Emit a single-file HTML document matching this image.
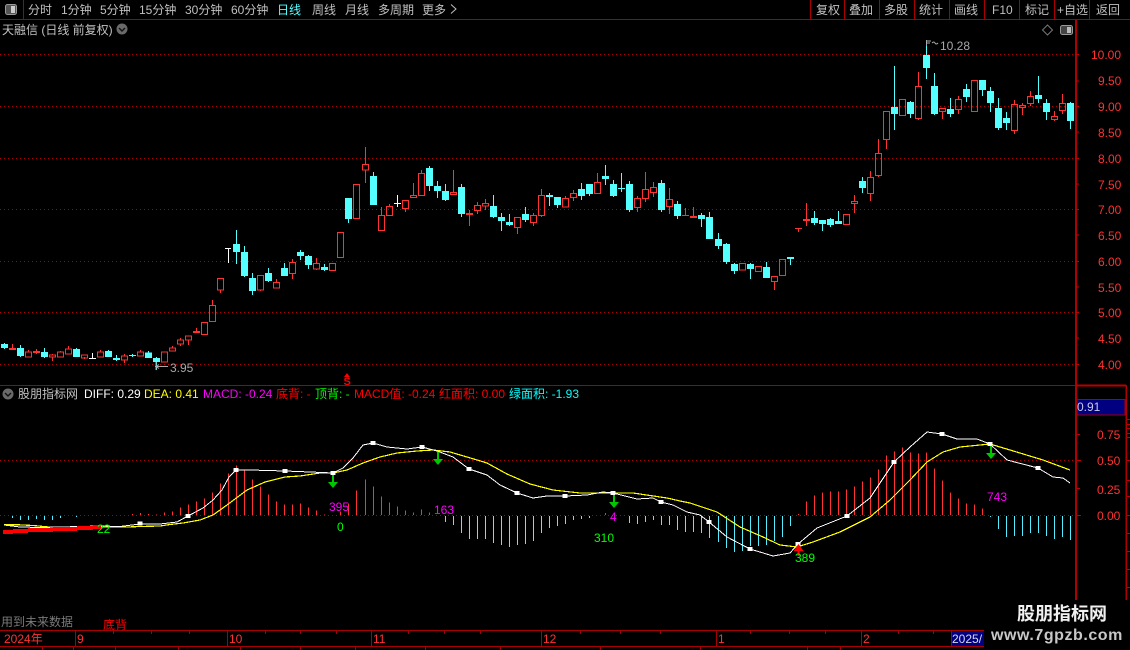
<!DOCTYPE html>
<html><head><meta charset="utf-8"><style>
html,body{margin:0;padding:0;background:#000;width:1130px;height:650px;overflow:hidden}
svg{display:block}
text{font-family:"Liberation Sans","WenQuanYi Zen Hei","Noto Sans CJK SC",sans-serif;font-size:12px}
</style></head><body>
<svg width="1130" height="650" viewBox="0 0 1130 650" xmlns="http://www.w3.org/2000/svg">
<defs><pattern id="d" width="4" height="1" patternUnits="userSpaceOnUse"><rect width="1" height="1" fill="#b00000"/></pattern></defs>
<rect width="1130" height="650" fill="#000"/>
<!-- grid -->
<g fill="url(#d)" shape-rendering="crispEdges">
<rect x="0" y="54" width="1075" height="1"/><rect x="0" y="106" width="1075" height="1"/><rect x="0" y="158" width="1075" height="1"/><rect x="0" y="209" width="1075" height="1"/><rect x="0" y="261" width="1075" height="1"/><rect x="0" y="312" width="1075" height="1"/><rect x="0" y="364" width="1075" height="1"/><rect x="0" y="460" width="1075" height="1"/><rect x="0" y="515" width="1075" height="1"/>
</g>
<!-- frame lines -->
<g stroke="#a80000" fill="none" shape-rendering="crispEdges">
<path d="M0 19.5H1130M23.5 0V19M810.5 0V19M844.5 0V19M879.5 0V19M914.5 0V19M949.5 0V19M984.5 0V19M1019.5 0V19M1054.5 0V19M1089.5 0V19"/>
<path d="M0 385.5H1075"/>
<path d="M0 630.5H1130M0 646.5H1130M75.5 631V646M227.5 631V646M371.5 631V646M541.5 631V646M716.5 631V646M861.5 631V646M951.5 631V646"/>
<path d="M113.5 631V634M151.5 631V634M189.5 631V634M265.5 631V634M300.5 631V634M336.5 631V634M408.5 631V634M444.5 631V634M480.5 631V634M580.5 631V634M620.5 631V634M660.5 631V634M750.5 631V634M789.5 631V634M825.5 631V634M898.5 631V634M933.5 631V634"/>
<path d="M42.5 647V650M73.5 647V650M115.5 647V650M178.5 647V650M240.5 647V650M300.5 647V650M355.5 647V650M425.5 647V650M500.5 647V650M600.5 647V650M700.5 647V650M807.5 647V650M840.5 647V650"/>
</g>
<path d="M1076 20V630" stroke="#b00000" stroke-width="2" shape-rendering="crispEdges"/>
<path d="M1076 385.5H1126" stroke="#b80000" stroke-width="2" shape-rendering="crispEdges"/>
<path d="M1126 385V600" stroke="#b00000" stroke-width="1.5" shape-rendering="crispEdges"/>
<path d="M1075 81H1079M1075 54.5H1079M1075 106.5H1079M1075 132H1079M1075 158.5H1079M1075 184H1079M1075 209.5H1079M1075 235H1079M1075 261.5H1079M1075 287H1079M1075 312.5H1079M1075 338H1079M1075 364.5H1079M1077 434.5H1080M1077 460.5H1081M1077 488.5H1080M1077 515.5H1081M1127 419.5H1130M1127 424.5H1130M1127 428.5H1130M1127 433.5H1130M1127 437.5H1130M1127 460.5H1130M1127 480.5H1130M1127 496.5H1130M1127 515.5H1130M1127 533.5H1130M1127 551.5H1130M1127 569.5H1130M1127 587.5H1130" stroke="#c00000" shape-rendering="crispEdges"/>
<!-- candles -->
<g shape-rendering="crispEdges">
<path fill="none" stroke="#54ffff" d="M4.5 343V349M20.5 345V357M44.5 348V358M76.5 348V357M108.5 350V357M116.5 355V361M132.5 354V357M148.5 351V358M156.5 357V370M236.5 230V264M244.5 246V277M252.5 273V295M268.5 268V282M284.5 263V276M300.5 250V260M308.5 255V269M324.5 264V271M348.5 198V223M373.5 172V205M429.5 166V191M437.5 181V198M445.5 184V201M461.5 184V217M493.5 195V218M501.5 213V231M509.5 214V226M525.5 207V222M549.5 193V206M557.5 197V208M581.5 183V200M589.5 184V196M605.5 165V185M613.5 180V197M621.5 173V192M629.5 181V212M661.5 180V212M677.5 201V219M701.5 213V227M709.5 212V239M718.5 233V249M726.5 243V264M734.5 263V274M750.5 263V279M766.5 262V278M790.5 257V265M814.5 211V225M822.5 220V231M830.5 218V227M838.5 211V224M862.5 177V193M894.5 66V130M910.5 101V118M926.5 45V79M934.5 73V115M950.5 98V117M966.5 84V102M982.5 80V96M990.5 87V112M998.5 98V130M1006.5 112V130M1038.5 76V103M1046.5 99V120M1070.5 102V129"/>
<path fill="#54ffff" d="M1 344h7v4h-7zM17 348h7v8h-7zM41 352h7v5h-7zM73 349h7v8h-7zM105 351h7v6h-7zM113 358h7v2h-7zM129 355h7v1h-7zM145 352.500h7v5.500h-7zM153 358h7v4h-7zM233 244h7v8h-7zM241 252h7v24h-7zM249 278h7v13h-7zM265 273h7v8h-7zM281 268h7v8h-7zM297 252h7v4h-7zM305 256h7v9h-7zM321 267h7v3h-7zM345 198h7v21h-7zM370 176h7v29h-7zM426 168h7v18h-7zM434 186h7v5h-7zM442 191h7v9h-7zM458 187h7v27h-7zM490 206h7v11h-7zM498 217h7v4h-7zM506 222h7v3h-7zM522 214h7v6h-7zM546 195h7v2h-7zM554 197h7v8h-7zM578 189h7v7h-7zM586 184h7v10h-7zM602 176h7v3h-7zM610 184h7v12h-7zM618 188h7v1h-7zM626 184h7v26h-7zM658 183h7v27h-7zM674 204h7v12h-7zM698 215h7v4h-7zM706 217h7v22h-7zM715 239h7v7h-7zM723 244h7v18h-7zM731 264h7v7h-7zM747 264h7v5h-7zM763 267h7v11h-7zM787 257h7v2h-7zM811 218h7v5h-7zM819 220h7v4h-7zM827 219h7v6h-7zM835 221h7v3h-7zM859 181h7v7h-7zM891 107h7v7h-7zM907 102h7v12h-7zM923 55h7v13h-7zM931 86h7v28h-7zM947 109h7v5h-7zM963 89h7v8h-7zM979 80h7v10h-7zM987 91h7v12h-7zM995 108h7v20h-7zM1003 118h7v5h-7zM1035 95h7v4h-7zM1043 103h7v9h-7zM1067 103h7v18h-7z"/>
<path fill="none" stroke="#ff3232" d="M12.500 344V350M36.500 349V354M196.500 328V333M469.500 210V226M693.500 207V218M806.500 203V226M685.500 208V216M798.500 228V232M28.500 350V352M52.500 354V355M52.500 357V361M60.500 351V352M68.500 346V349M84.500 357V359M100.500 350V352M124.500 354V356M124.500 360V363M140.500 350V352M172.500 346V348M180.500 338V340M180.500 344V346M188.500 340V345M212.500 300V305M212.500 321V322M220.500 290V293M260.500 290V291M276.500 279V282M292.500 259V263M292.500 273V279M316.500 258V264M316.500 269V270M365.500 147V165M365.500 170V183M381.500 207V215M389.500 204V207M405.500 208V212M413.500 183V195M421.500 170V174M453.500 170V192M477.500 202V206M477.500 210V214M485.500 199V204M485.500 206V210M517.500 227V234M533.500 213V216M533.500 222V226M541.500 189V196M541.500 215V217M565.500 196V199M573.500 190V194M573.500 197V201M597.500 173V183M637.500 196V199M637.500 207V212M645.500 172V190M645.500 198V202M653.500 182V188M653.500 192V197M669.500 188V200M669.500 206V214M774.500 281V290M854.500 195V201M854.500 204V213M870.500 171V177M870.500 193V201M878.500 139V153M878.500 175V177M886.500 139V149M918.500 72V86M918.500 118V120M942.500 111V119M958.500 96V100M958.500 110V114M974.500 80.500V81M1014.500 100V105M1014.500 130V134M1022.500 103V106M1022.500 107V115M1030.500 91V97M1030.500 103V106M1054.500 111V117M1054.500 119V121M1062.500 94V104M1062.500 110V114"/>
<path fill="#ff3232" d="M9 348h7v2h-7zM33 351h7v2h-7zM193 331h7v2h-7zM466 213h7v2h-7zM690 216h7v2h-7zM803 219h7v2h-7zM682 215h7v1h-7zM795 228h7v1h-7z"/>
<path fill="none" stroke="#ff3232" d="M25.500 352h6v5h-6zM49.500 355h6v2h-6zM57.500 352h6v5h-6zM65.500 349h6v5h-6zM81.500 355h6v3h-6zM97.500 352h6v5h-6zM121.500 356h6v4h-6zM137.500 352h6v4h-6zM161.500 352h6v10h-6zM169.500 348h6v3h-6zM177.500 340h6v4h-6zM185.500 336h6v4h-6zM201.500 322.500h6v12h-6zM209.500 305.500h6v16h-6zM217.500 278.500h6v11.500h-6zM257.500 275.500h6v14.500h-6zM273.500 282.500h6v5.500h-6zM289.500 262.500h6v11h-6zM313.500 263.500h6v5.500h-6zM329.500 263.500h6v7h-6zM337.500 232.500h6v25h-6zM353.500 184.500h6v34h-6zM362.500 164.500h6v5.500h-6zM378.500 215.500h6v15h-6zM386.500 206.500h6v9h-6zM402.500 200.500h6v8h-6zM410.500 195.500h6v2h-6zM418.500 173.500h6v22h-6zM450.500 192.500h6v2h-6zM474.500 205.500h6v5h-6zM482.500 203.500h6v2.500h-6zM514.500 217.500h6v10h-6zM530.500 215.500h6v7h-6zM538.500 195.500h6v20h-6zM562.500 198.500h6v8.500h-6zM570.500 193.500h6v4h-6zM594.500 182.500h6v11h-6zM634.500 198.500h6v9h-6zM642.500 189.500h6v9h-6zM650.500 187.500h6v5h-6zM666.500 199.500h6v7h-6zM739.500 263.500h6v6.500h-6zM755.500 266.500h6v5h-6zM771.500 276.500h6v5h-6zM779.500 259.500h6v16h-6zM843.500 214.500h6v10h-6zM851.500 201.500h6v2h-6zM867.500 177.500h6v16h-6zM875.500 153.500h6v22h-6zM883.500 111.500h6v28h-6zM899.500 99.500h6v16h-6zM915.500 86.500h6v32h-6zM939.500 108.500h6v3h-6zM955.500 99.500h6v10h-6zM971.500 80.500h6v31h-6zM1011.500 104.500h6v26h-6zM1019.500 105.500h6v2h-6zM1027.500 96.500h6v7h-6zM1051.500 116.500h6v3h-6zM1059.500 103.500h6v7h-6z"/>
<path fill="none" stroke="#fff" d="M92.500 353V358M89 358.500h7M228.500 248V263M225 248.500h6M397.500 195V207M394 203.500h7"/>
</g>
<!-- high low labels -->
<path d="M156 362V370M155 366.500H168M156 366.500l3-2M156 366.500l3 2" stroke="#aaa" fill="none"/>
<text x="170" y="372" fill="#a8a8a8">3.95</text>
<path d="M926.500 40V46M927 41h4M927 43h3M932 43q2-2 3 0t3 0" stroke="#aaa" fill="none"/>
<text x="940" y="50" fill="#a8a8a8">10.28</text>
<!-- S marker -->
<path d="M347 373l3 4h-6z" fill="#f00"/>
<text x="343.500" y="385" fill="#f00" style="font-weight:bold;font-size:11px">S</text>
<!-- header -->
<rect x="5.500" y="4.500" width="11" height="10" rx="2" fill="#555" stroke="#999"/><rect x="11" y="6" width="4" height="7" fill="#ccc"/>
<g fill="#c0c0c0">
<text x="28" y="14">分时</text><text x="61" y="14">1分钟</text><text x="100" y="14">5分钟</text><text x="139" y="14">15分钟</text><text x="185" y="14">30分钟</text><text x="231" y="14">60分钟</text>
<text x="277" y="14" fill="#54ffff">日线</text>
<text x="312" y="14">周线</text><text x="345" y="14">月线</text><text x="378" y="14">多周期</text><text x="422" y="14">更多</text>
<text x="816" y="14">复权</text><text x="849" y="14">叠加</text><text x="884" y="14">多股</text><text x="919" y="14">统计</text><text x="954" y="14">画线</text><text x="992" y="14">F10</text><text x="1025" y="14">标记</text><text x="1057" y="14">+自选</text><text x="1096" y="14">返回</text>
<text x="2" y="34">天融信 (日线 前复权)</text>
</g>
<path d="M451 4.500l5 4.500-5 4.500" stroke="#c0c0c0" fill="none"/>
<circle cx="122" cy="29" r="5.500" fill="#6a6a6a"/><path d="M119 28l3 3 3-3" stroke="#111" fill="none" stroke-width="1.400"/>
<path d="M1047.500 25l5 5-5 5-5-5z" stroke="#777" fill="none"/>
<rect x="1060.500" y="25.500" width="12" height="9" rx="2" fill="#444" stroke="#999"/><rect x="1067" y="27" width="4" height="6" fill="#bbb"/>
<!-- axis labels -->
<g fill="#ff3232">
<text x="1091" y="59">10.00</text><text x="1098" y="85">9.50</text><text x="1098" y="111">9.00</text><text x="1098" y="137">8.50</text><text x="1098" y="163">8.00</text><text x="1098" y="189">7.50</text><text x="1098" y="214">7.00</text><text x="1098" y="240">6.50</text><text x="1098" y="266">6.00</text><text x="1098" y="292">5.50</text><text x="1098" y="317">5.00</text><text x="1098" y="343">4.50</text><text x="1098" y="369">4.00</text>
<text x="1097" y="439">0.75</text><text x="1097" y="465">0.50</text><text x="1097" y="494">0.25</text><text x="1097" y="520">0.00</text>
</g>
<rect x="1077" y="399.500" width="48" height="15.500" fill="#000080" stroke="#a80000"/>
<text x="1077" y="411" fill="#c8c8e8">0.91</text>
<!-- indicator header -->
<circle cx="8" cy="394" r="5.500" fill="#6a6a6a"/><path d="M5 393l3 3 3-3" stroke="#111" fill="none" stroke-width="1.400"/>
<text x="18" y="398" fill="#c0c0c0">股朋指标网</text>
<text x="84" y="398" fill="#fff">DIFF: 0.29</text>
<text x="144" y="398" fill="#ffff00">DEA: 0.41</text>
<text x="203" y="398" fill="#ff00ff">MACD: -0.24</text>
<text x="276" y="398" fill="#f00">底背: -</text>
<text x="315" y="398" fill="#0f0">顶背: -</text>
<text x="354" y="398" fill="#f00">MACD值: -0.24</text>
<text x="439" y="398" fill="#f00">红面积: 0.00</text>
<text x="509" y="398" fill="#00ffff">绿面积: -1.93</text>
<!-- histogram -->
<g shape-rendering="crispEdges" fill="none">
<path stroke="#ff3232" d="M132.500 514V515M140.500 513V515M148.500 514V515M156.500 514.500V515M164.500 512.500V515M172.500 511.500V515M180.500 507.500V515M188.500 504.500V515M196.500 501.500V515M204.500 498.500V515M212.500 492.500V515M220.500 483.500V515M228.500 473.500V515M236.500 465.500V515M244.500 470.500V515M252.500 479.500V515M260.500 486.500V515M268.500 494.500V515M276.500 501.500V515M284.500 504.500V515M292.500 504.500V515M300.500 503.500V515M308.500 507.500V515M316.500 510.500V515M324.500 514.500V515M340.500 511.500V515M348.500 503.500V515M356.500 490.500V515M365.500 479.500V515M373.500 486.500V515M381.500 496.500V515M389.500 502.500V515M397.500 506.500V515M405.500 510.500V515M413.500 512.500V515M421.500 509.500V515M429.500 512.500V515M605.500 513V515M798.500 514V515M806.500 501.500V515M814.500 495.500V515M822.500 492.500V515M830.500 491.500V515M838.500 491.500V515M846.500 489.500V515M854.500 486.500V515M862.500 481.500V515M870.500 477.500V515M878.500 469.500V515M886.500 455.500V515M894.500 451.500V515M902.500 447.500V515M910.500 452.500V515M918.500 453.500V515M926.500 452.500V515M934.500 468.500V515M942.500 480.500V515M950.500 492.500V515M958.500 498.500V515M966.500 503.500V515M974.500 504.500V515M982.500 508.500V515"/>
<path stroke="#54ecff" d="M12.500 516V518M20.500 516V520M28.500 516V520M36.500 516V519M44.500 516V520M52.500 516V520M60.500 516V518M76.500 516V517M445.500 516V522M453.500 516V525M461.500 516V533M469.500 516V539M477.500 516V539M485.500 516V539M493.500 516V543M501.500 516V545M509.500 516V547M517.500 516V545M525.500 516V544M533.500 516V541M541.500 516V533M549.500 516V528M557.500 516V526M565.500 516V524M573.500 516V520M581.500 516V519M589.500 516V518M629.500 516V523M637.500 516V524M645.500 516V522M653.500 516V520M661.500 516V525M669.500 516V525M677.500 516V530M685.500 516V532M693.500 516V532M701.500 516V533M709.500 516V538M718.500 516V542M726.500 516V548M734.500 516V552M742.500 516V551M750.500 516V546M758.500 516V546M766.500 516V545M774.500 516V541M782.500 516V537M790.500 516V526M990.500 516V517M998.500 516V529M1006.500 516V537M1014.500 516V536M1022.500 516V536M1030.500 516V533M1038.500 516V533M1046.500 516V536M1054.500 516V539M1062.500 516V537M1070.500 516V540"/>
</g>
<!-- DEA / DIFF -->
<path fill="none" stroke="#ffff00" stroke-width="1.200" shape-rendering="crispEdges" d="M4 524.700L17 524.700L33 525.500L49 527L70 527.500L100 527L127 527L140 526.500L160 526L170 524.500L183 523L200 520L213 515L227 505L247 490L265 482L285 477L300 476L320 473L333 473L347 470L363 463L380 457L397 453L417 451L433 450L450 452L467 457L487 463L507 474L530 484L553 490L580 493L603 493L633 493L667 498L680 501L690 503L717 512L740 527L763 537L780 545L797 547L813 542L840 532L870 517L890 500L910 480L927 462L943 452L960 447L990 444L1010 450L1043 460L1070 470"/>
<path fill="none" stroke="#fff" shape-rendering="crispEdges" d="M4 525L20 527L40 527.500L60 527L100 526L120 526.500L140 524L160 524L177 522L188 516L203 508L213 500L222 490L229 477L236 470L250 470L285 471L310 472L333 473L343 468L353 458L363 445L373 443L387 447L407 449L422 447L437 451L453 457L469 469L487 475L500 485L517 493L533 498L547 496L565 496L587 495L603 492L613 493L637 499L653 498L661 502L673 505L687 512L700 515L709 522L727 537L750 549L773 556L790 553L798 544L817 528L847 516L870 498L894 462L910 447L927 432L942 434L957 439L977 439L990 444L1007 460L1038 468L1053 477L1063 478L1070 483"/>
<path fill="#fff" d="M137.500 521.500h5v4h-5zM185.500 514h5v4h-5zM233.500 468h5v4h-5zM282.500 469h5v4h-5zM330.500 471h5v4h-5zM370.500 441h5v4h-5zM419.500 445h5v4h-5zM466.500 467h5v4h-5zM514.500 491h5v4h-5zM562.500 494h5v4h-5zM610.500 491h5v4h-5zM658.500 500h5v4h-5zM706.500 520h5v4h-5zM747.500 547h5v4h-5zM795.500 542h5v4h-5zM844.500 514h5v4h-5zM891.500 460h5v4h-5zM939.500 432h5v4h-5zM987.500 442h5v4h-5zM1035.500 466h5v4h-5z"/>
<!-- thick red line -->
<path d="M3 530H13V529H28V528H53V527H77V526H93V525H101V529H93V530H77V531H53V532H28V533H13V534H3Z" fill="#f00" shape-rendering="crispEdges"/>
<!-- arrows -->
<g fill="#00c800">
<path d="M332 475h2v7h4l-5 6-5-6h4z"/><path d="M437 452h2v7h4l-5 6-5-6h4z"/><path d="M613 495h2v7h4l-5 6-5-6h4z"/><path d="M990 446h2v7h4l-5 6-5-6h4z"/>
</g>
<path d="M798.500 544l5 7h-4v5h-2v-5h-4z" fill="#f00"/>
<!-- signal text -->
<text x="97" y="533" fill="#0f0">22</text>
<text x="329" y="511" fill="#ff00ff">395</text>
<text x="337" y="531" fill="#0f0">0</text>
<text x="434" y="514" fill="#ff00ff">163</text>
<text x="610" y="521" fill="#ff00ff">4</text>
<text x="594" y="542" fill="#0f0">310</text>
<text x="795" y="562" fill="#0f0">389</text>
<text x="987" y="501" fill="#ff00ff">743</text>
<text x="1" y="626" fill="#7a7a7a">用到未来数据</text>
<svg x="100" y="610" width="40" height="20"><text x="3" y="19" fill="#f00">底背</text></svg>
<!-- time axis text -->
<g fill="#ff3232">
<text x="4" y="643">2024年</text><text x="77" y="643">9</text><text x="229" y="643">10</text><text x="373" y="643">11</text><text x="543" y="643">12</text><text x="718" y="643">1</text><text x="863" y="643">2</text>
</g>
<rect x="952" y="631" width="32" height="15" fill="#000080"/>
<text x="952" y="643" fill="#d8d8f0">2025/</text>
<!-- watermark -->
<rect x="984" y="600" width="146" height="50" fill="#000"/>
<text x="1017" y="620" fill="#f0f0f0" style="font-size:18px;font-weight:bold">股朋指标网</text>
<text x="991" y="640" fill="#c8c8c8" style="font-size:16px;font-weight:bold;letter-spacing:.55px">www.7gpzb.com</text>
</svg>
</body></html>
